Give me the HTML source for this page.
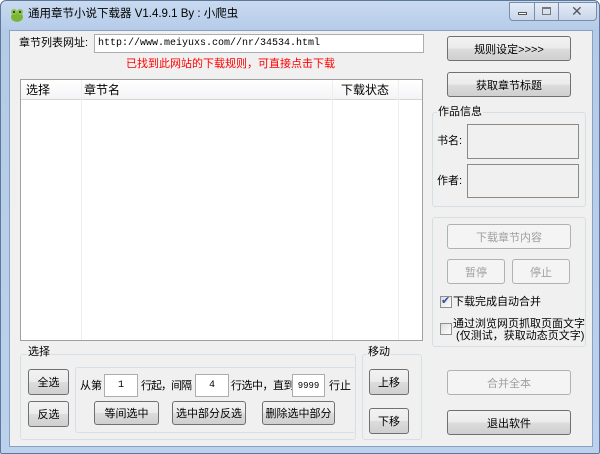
<!DOCTYPE html>
<html><head><meta charset="utf-8"><style>
*{box-sizing:border-box;margin:0;padding:0}
body{width:600px;height:454px;overflow:hidden;background:#fff;font-family:"Liberation Sans","Noto Sans CJK SC",sans-serif;font-size:11px;color:#000}
.win{position:absolute;left:0;top:0;width:600px;height:454px;border-radius:6px 6px 2px 2px;background:linear-gradient(#c9daf0,#b4cbe8 30px,#bcd1ec);border:1px solid #5d7898}
.client{position:absolute;left:8px;top:29px;width:584px;height:417px;background:#f0f0f0;border:1px solid #8aa2c2}
.a{position:absolute;white-space:nowrap;line-height:14px}
.btn{position:absolute;white-space:nowrap;border:1px solid #707070;border-radius:3px;background:linear-gradient(#f2f2f2,#ebebeb 50%,#dddddd 50%,#cfcfcf);text-align:center;font-size:11px;display:flex;align-items:center;justify-content:center}
.dis{border-color:#adb2b5;background:#f4f4f4;color:#a0a0a0}
.inp{position:absolute;background:#fff;border:1px solid #abadb3;font-family:"Liberation Mono",monospace;font-size:10px;display:flex;align-items:center}
.grp{position:absolute;border:1px solid #d5dfe5;border-radius:3px}
.lbl{position:absolute;background:#f0f0f0;padding:0 1px;line-height:14px}
.wb{position:absolute;top:1px;height:19px;border:1px solid #7b8ca8;background:linear-gradient(#e4ecf7,#c8d6ea);}
.cb{position:absolute;width:12px;height:12px;border:1px solid #8f8f8f;background:linear-gradient(135deg,#ddd,#fff)}
</style></head><body>
<div class="win">
<svg style="position:absolute;left:8px;top:6px" width="16" height="16"><ellipse cx="8" cy="10" rx="6" ry="5" fill="#7ab53a"/><circle cx="5" cy="5" r="3" fill="#8cc44a"/><circle cx="11" cy="5" r="3" fill="#8cc44a"/><circle cx="5" cy="5" r="1" fill="#222"/><circle cx="11" cy="5" r="1" fill="#222"/></svg>
<div class="a" style="left:27px;top:6px;font-size:11.5px">通用章节小说下载器 V1.4.9.1 By : 小爬虫</div>
<div class="wb" style="left:508px;width:26px;border-radius:0 0 0 4px"><div style="position:absolute;left:8px;top:9px;width:9px;height:3px;border:1px solid #555;background:#fff"></div></div>
<div class="wb" style="left:533px;width:25px"><div style="position:absolute;left:7px;top:4px;width:9px;height:8px;border:1px solid #777;border-top-width:2px"></div></div>
<div class="wb" style="left:557px;width:39px;border-radius:0 0 4px 0"><div style="position:absolute;left:12px;top:0px;color:#555;font-size:14px">✕</div></div>
<div class="client"></div>
</div>
<div class="a" style="left:19px;top:36px">章节列表网址:</div>
<div class="inp" style="left:94px;top:34px;width:330px;height:19px;padding-left:3px">http://www.meiyuxs.com//nr/34534.html</div>
<div class="a" style="left:126px;top:57px;color:#f00">已找到此网站的下载规则，可直接点击下载</div>
<div style="position:absolute;left:20px;top:79px;width:403px;height:262px;background:#fff;border:1px solid #a0a0a0">
<div style="position:absolute;left:0;top:0;width:401px;height:20px;background:linear-gradient(#fff,#f3f4f6);border-bottom:1px solid #d5d5d5"></div>
<div style="position:absolute;left:60px;top:0;width:1px;height:260px;background:#eee"></div>
<div style="position:absolute;left:311px;top:0;width:1px;height:260px;background:#eee"></div>
<div style="position:absolute;left:377px;top:0;width:1px;height:260px;background:#eee"></div>
<div class="a" style="left:5px;top:3px;font-size:12px">选择</div>
<div class="a" style="left:63px;top:3px;font-size:12px">章节名</div>
<div class="a" style="left:320px;top:3px;font-size:12px">下载状态</div>
</div>
<div class="btn" style="left:447px;top:36px;width:124px;height:25px">规则设定&gt;&gt;&gt;&gt;</div>
<div class="btn" style="left:447px;top:72px;width:124px;height:25px">获取章节标题</div>
<div class="grp" style="left:432px;top:112px;width:154px;height:95px"></div>
<div class="lbl" style="left:437px;top:105px">作品信息</div>
<div class="a" style="left:437px;top:134px">书名:</div>
<div style="position:absolute;left:467px;top:124px;width:112px;height:35px;border:1px solid #8a8a8a;background:#f0f0f0"></div>
<div class="a" style="left:437px;top:174px">作者:</div>
<div style="position:absolute;left:467px;top:164px;width:112px;height:34px;border:1px solid #8a8a8a;background:#f0f0f0"></div>
<div class="grp" style="left:432px;top:217px;width:154px;height:130px"></div>
<div class="btn dis" style="left:447px;top:224px;width:124px;height:25px">下载章节内容</div>
<div class="btn dis" style="left:447px;top:259px;width:58px;height:25px">暂停</div>
<div class="btn dis" style="left:512px;top:259px;width:58px;height:25px">停止</div>
<div class="cb" style="left:440px;top:296px"><span style="position:absolute;left:0;top:-3px;font-size:11px;color:#2a4fa0">✔</span></div>
<div class="a" style="left:453px;top:295px">下载完成自动合并</div>
<div class="cb" style="left:440px;top:323px"></div>
<div class="a" style="left:453px;top:318px;line-height:12px">通过浏览网页抓取页面文字<br>&nbsp;(仅测试，获取动态页文字)</div>
<div class="btn dis" style="left:447px;top:370px;width:124px;height:25px">合并全本</div>
<div class="btn" style="left:447px;top:410px;width:124px;height:25px">退出软件</div>
<div class="grp" style="left:20px;top:354px;width:336px;height:86px"></div>
<div class="lbl" style="left:27px;top:345px">选择</div>
<div class="btn" style="left:28px;top:369px;width:41px;height:26px">全选</div>
<div class="btn" style="left:28px;top:401px;width:41px;height:26px">反选</div>
<div class="grp" style="left:75px;top:367px;width:281px;height:66px"></div>
<div class="a" style="left:80px;top:379px">从第</div>
<div class="inp" style="left:104px;top:374px;width:34px;height:23px;justify-content:center">1</div>
<div class="a" style="left:141px;top:379px;letter-spacing:-1px">行起，间隔</div>
<div class="inp" style="left:195px;top:374px;width:34px;height:23px;justify-content:center">4</div>
<div class="a" style="left:231px;top:379px;letter-spacing:-0.5px">行选中，直到</div>
<div class="inp" style="left:292px;top:374px;width:33px;height:23px;justify-content:center;font-size:9px">9999</div>
<div class="a" style="left:329px;top:379px">行止</div>
<div class="btn" style="left:94px;top:401px;width:65px;height:24px">等间选中</div>
<div class="btn" style="left:172px;top:401px;width:74px;height:24px">选中部分反选</div>
<div class="btn" style="left:262px;top:401px;width:73px;height:24px">删除选中部分</div>
<div class="grp" style="left:362px;top:354px;width:60px;height:86px"></div>
<div class="lbl" style="left:367px;top:345px">移动</div>
<div class="btn" style="left:369px;top:369px;width:40px;height:26px">上移</div>
<div class="btn" style="left:369px;top:408px;width:40px;height:26px">下移</div>
</body></html>
